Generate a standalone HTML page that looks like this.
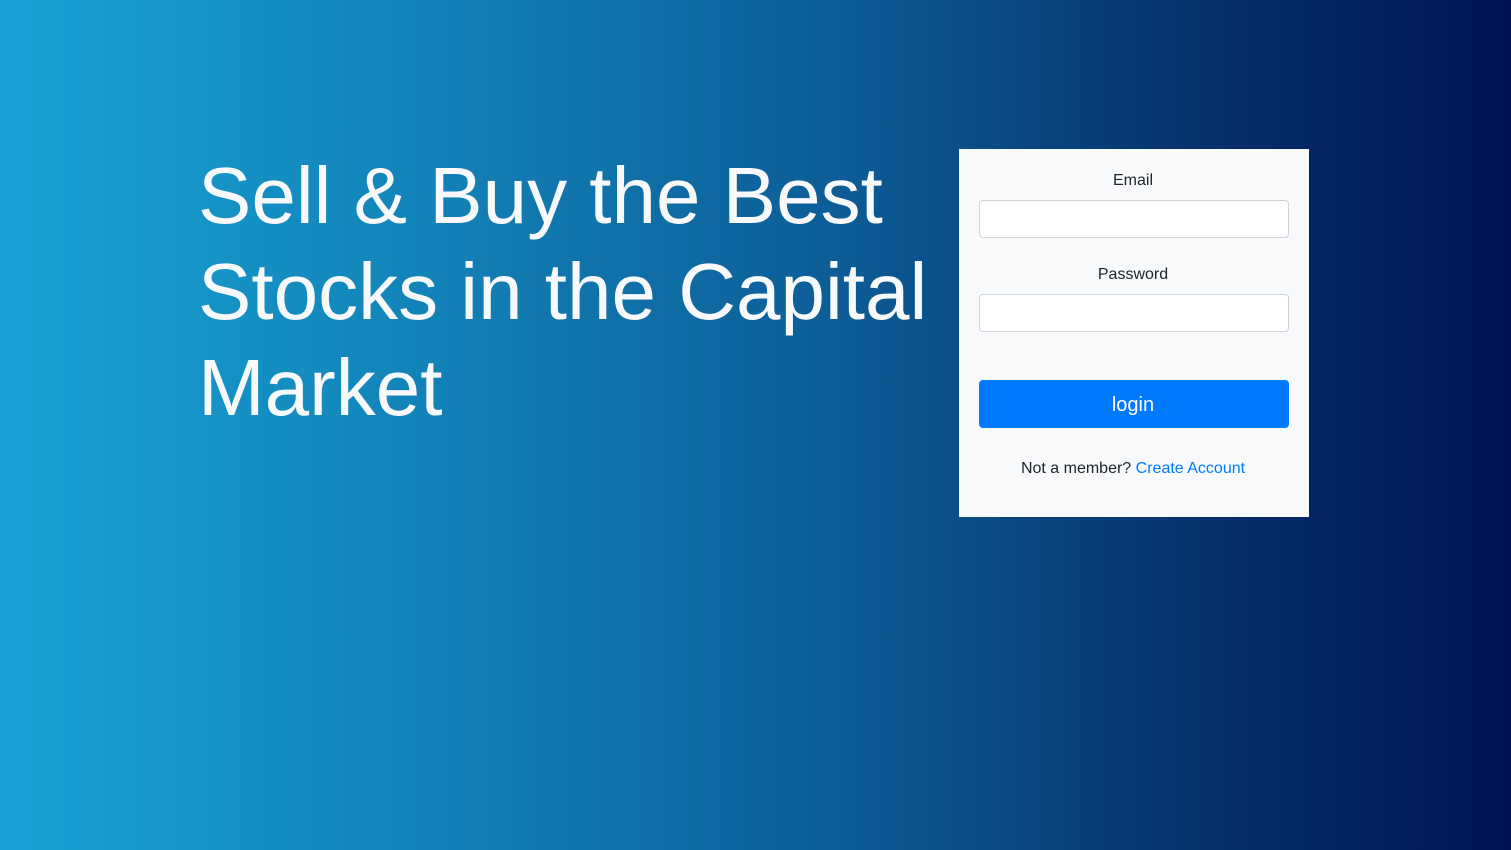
<!DOCTYPE html>
<html><head><style>
html,body{margin:0;padding:0;width:1511px;height:850px;overflow:hidden}
body{background:linear-gradient(to right,#18a3d4 0%,#1280b6 30%,#0d5d97 55%,#06306c 80%,#001255 100%);font-family:"Liberation Sans",sans-serif;position:relative}
h1{position:absolute;left:198px;top:148px;margin:0;font-weight:400;font-size:80px;line-height:96px;color:#f8f9fa;width:760px}
.card{position:absolute;left:959px;top:149px;width:350px;height:368px;background:#f8f9fa}
label{position:absolute;left:-1px;width:350px;text-align:center;font-size:16px;color:#212529}
.in{position:absolute;left:20px;width:308px;height:36px;background:#fff;border:1px solid #ced4da;border-radius:4px}
.btn{position:absolute;left:20px;top:231px;width:310px;height:48px;background:#007bff;border-radius:4px;color:#fff;font-size:20px;text-align:center;line-height:50px;text-indent:-2px}
.foot{position:absolute;left:-1px;top:311px;width:350px;text-align:center;font-size:16px;color:#212529}
.foot span{color:#007bff}
</style></head><body>
<h1>Sell &amp; Buy the Best Stocks in the Capital Market</h1>
<div class="card">
<label style="top:23px">Email</label>
<div class="in" style="top:51px"></div>
<label style="top:117px">Password</label>
<div class="in" style="top:145px"></div>
<div class="btn">login</div>
<div class="foot">Not a member? <span>Create Account</span></div>
</div>
</body></html>
